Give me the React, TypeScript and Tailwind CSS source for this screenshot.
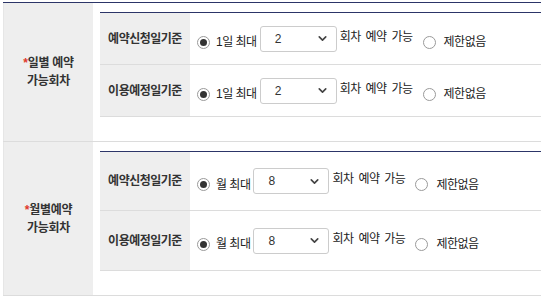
import React from 'react';
import { ChevronDown } from 'lucide-react';

type Row = { label: string; prefix: string; value: string; rowH: string; selectW: string };

const Radio = ({ checked }: { checked?: boolean }) => (
  <span className="w-[13px] h-[13px] rounded-full border border-[#9a9a9a] bg-white flex items-center justify-center shrink-0">
    {checked && <span className="w-[7px] h-[7px] rounded-full bg-[#333]" />}
  </span>
);

const OptionRow = ({ row }: { row: Row }) => (
  <div className={`flex border-b border-[#dcdcdc] ${row.rowH}`}>
    <div className="w-[90px] shrink-0 bg-[#eeeeee] flex items-center justify-center font-bold text-[12px] tracking-[-0.5px] text-[#333]">
      {row.label}
    </div>
    <div className="flex-1 flex items-center pl-[7px] text-[12px] tracking-[-0.5px] text-[#222]">
      <label className="flex items-center gap-[6px] pt-[7px]">
        <Radio checked />
        <span>{row.prefix}</span>
      </label>
      <div
        className={`ml-[3px] ${row.selectW} h-[26px] border border-[#cccccc] rounded-[3px] bg-white flex items-center justify-between pl-[14px] pr-[7px] text-[#333]`}
      >
        <span className="text-[12px]">{row.value}</span>
        <ChevronDown size={13} strokeWidth={3} className="text-[#444]" />
      </div>
      <span className="ml-[3px] pb-[4px] [word-spacing:2px]">회차 예약 가능</span>
      <label className="flex items-center gap-[8px] pt-[7px] ml-[10px]">
        <Radio />
        <span>제한없음</span>
      </label>
    </div>
  </div>
);

const Section = ({ title, rows }: { title: string; rows: Row[] }) => (
  <div className="flex border-b border-[#dcdcdc]">
    <div className="w-[90px] shrink-0 bg-[#eeeeee] border-l border-[#e6e6e6] flex flex-col items-center justify-center font-bold text-[12px] leading-[18px] tracking-[-0.3px] text-[#333]">
      <div>
        <span className="text-[#e0392b]">*</span>
        {title}
      </div>
      <div>가능회차</div>
    </div>
    <div className="flex-1 pl-[7px] pt-[9px] pb-[24px]">
      <div className="border-t border-[#2c3568]">
        {rows.map((r, i) => (
          <OptionRow key={i} row={r} />
        ))}
      </div>
    </div>
  </div>
);

export default function App() {
  const daily: Row[] = [
    { label: '예약신청일기준', prefix: '1일 최대', value: '2', rowH: 'h-[52px]', selectW: 'w-[77px]' },
    { label: '이용예정일기준', prefix: '1일 최대', value: '2', rowH: 'h-[52px]', selectW: 'w-[77px]' },
  ];
  const monthly: Row[] = [
    { label: '예약신청일기준', prefix: '월 최대', value: '8', rowH: 'h-[59px]', selectW: 'w-[76px]' },
    { label: '이용예정일기준', prefix: '월 최대', value: '8', rowH: 'h-[60px]', selectW: 'w-[76px]' },
  ];

  return (
    <div className="w-[543px] h-[306px] bg-white font-['Liberation_Sans','Noto_Sans_CJK_KR',sans-serif]">
      <div className="ml-[3px] mr-[2px] mt-[2px] border-t border-[#2c3568]">
        <Section title="일별 예약" rows={daily} />
        <Section title="월별예약" rows={monthly} />
      </div>
    </div>
  );
}
